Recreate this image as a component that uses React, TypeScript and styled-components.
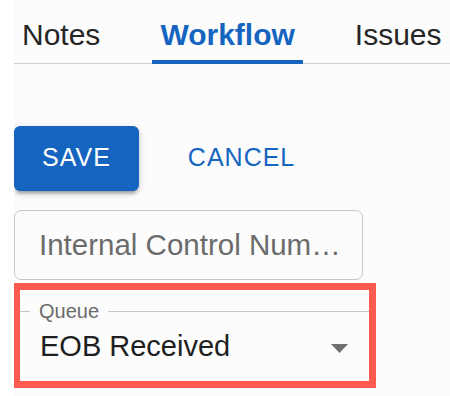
import React, { useState } from 'react'
import styled, { createGlobalStyle } from 'styled-components'

const GlobalStyle = createGlobalStyle`
  html, body {
    margin: 0;
    padding: 0;
    background: #ffffff;
  }
  body {
    font-family: "Liberation Sans", Arial, Helvetica, sans-serif;
  }
`

const Panel = styled.div`
  margin-left: 14px;
  min-height: 396px;
  background: #fcfcfc;
  overflow: hidden;
`

const TabBar = styled.div`
  display: flex;
  gap: 44px;
  height: 63px;
  border-bottom: 1px solid #cfcfcf;
  white-space: nowrap;
`

const Tab = styled.button<{ $active?: boolean }>`
  position: relative;
  flex: none;
  height: 63px;
  padding: 7px 8px 0;
  border: none;
  background: none;
  font-family: inherit;
  font-size: 30px;
  line-height: 30px;
  text-align: center;
  align-self: flex-start;
  font-weight: ${(p) => (p.$active ? 700 : 400)};
  color: ${(p) => (p.$active ? '#1565c0' : '#262626')};
  cursor: pointer;

  &::after {
    content: '';
    display: ${(p) => (p.$active ? 'block' : 'none')};
    position: absolute;
    left: 0;
    right: 0;
    bottom: -1px;
    height: 4px;
    background: #1565c0;
  }
`

const Body = styled.div`
  display: flex;
  flex-direction: column;
  align-items: flex-start;
  padding-top: 62px;
`

const ButtonRow = styled.div`
  display: flex;
  gap: 21px;
  margin-bottom: 19px;
`

const Button = styled.button<{ $variant: 'contained' | 'text' }>`
  height: 65px;
  padding: 0 28px 3px;
  border: none;
  border-radius: 6px;
  font-family: inherit;
  font-size: 25px;
  letter-spacing: 1px;
  text-transform: uppercase;
  cursor: pointer;
  background: ${(p) => (p.$variant === 'contained' ? '#1565c0' : 'transparent')};
  color: ${(p) => (p.$variant === 'contained' ? '#ffffff' : '#1565c0')};
  box-shadow: ${(p) =>
    p.$variant === 'contained'
      ? '0 5px 3px -3px rgba(0,0,0,0.2), 0 3px 4px 0 rgba(0,0,0,0.14), 0 2px 8px 0 rgba(0,0,0,0.12)'
      : 'none'};
`

const TextInput = styled.input`
  box-sizing: border-box;
  width: 349px;
  height: 70px;
  padding: 0 18px 0 24px;
  border: 1px solid #c8c8c8;
  border-radius: 7px;
  background: #fcfcfc;
  font-family: inherit;
  font-size: 29.5px;
  color: #222;
  text-overflow: ellipsis;
  outline: none;

  &::placeholder {
    color: #6b6b6b;
    opacity: 1;
  }
`

const Highlight = styled.div`
  margin: 3px 0 0 -1px;
  width: 349px;
  height: 91px;
  border: 7px solid #ff5a4f;
`

const Field = styled.fieldset`
  margin: 10px 0 0;
  padding: 0;
  min-width: 0;
  border: none;
  border-top: 1px solid #c4c4c4;
`

const Legend = styled.legend`
  margin-left: 10px;
  padding: 0 9px;
  font-size: 20px;
  line-height: 22px;
  color: #6b6b6b;
`

const ValueRow = styled.div`
  display: flex;
  align-items: center;
  justify-content: space-between;
  padding: 4px 21px 0 20px;
  height: 40px;
  line-height: 40px;
  font-size: 29px;
  color: #1f1f1f;
`

const Caret = styled.svg`
  margin-top: 4px;
  flex: none;
`

export default function App() {
  const [tab, setTab] = useState('Workflow')
  const tabs = ['Notes', 'Workflow', 'Issues']

  return (
    <>
      <GlobalStyle />
      <Panel>
        <TabBar>
          {tabs.map((t) => (
            <Tab key={t} $active={tab === t} onClick={() => setTab(t)}>
              {t}
            </Tab>
          ))}
        </TabBar>

        <Body>
          <ButtonRow>
            <Button $variant="contained">Save</Button>
            <Button $variant="text">Cancel</Button>
          </ButtonRow>

          <TextInput placeholder="Internal Control Number" />

          {/* queue select, highlighted */}
          <Highlight>
            <Field>
              <Legend>Queue</Legend>
              <ValueRow>
                <span>EOB Received</span>
                <Caret width="17" height="9" viewBox="0 0 17 9">
                  <polygon points="0,0 17,0 8.5,9" fill="#6f6f6f" />
                </Caret>
              </ValueRow>
            </Field>
          </Highlight>
        </Body>
      </Panel>
    </>
  )
}
